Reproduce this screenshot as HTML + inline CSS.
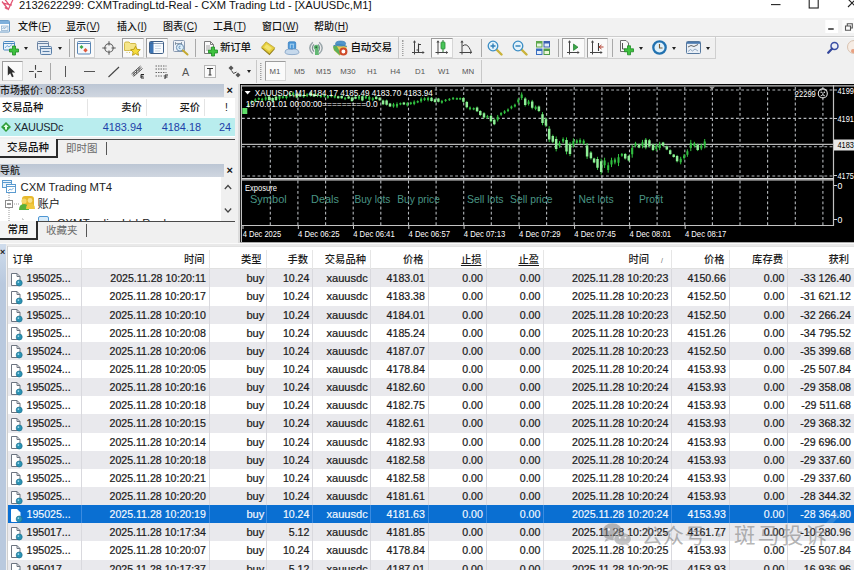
<!DOCTYPE html>
<html lang="zh-CN">
<head>
<meta charset="utf-8">
<title>2132622299: CXMTradingLtd-Real - CXM Trading Ltd - [XAUUSDc,M1]</title>
<style>
*{box-sizing:border-box;margin:0;padding:0}
html,body{width:854px;height:570px;overflow:hidden;background:#f0f0f0}
body{position:relative;font-family:"Liberation Sans","Noto Sans CJK SC",sans-serif;font-size:11px;color:#1a1a1a}
.abs{position:absolute}
svg{display:block}
/* title */
#title{position:absolute;left:0;top:0;width:854px;height:18px;background:#fff}
#title .t{position:absolute;left:19px;top:-2px;font-size:11.150px;line-height:15px;color:#111;white-space:nowrap}
/* menu */
#menu{position:absolute;left:0;top:18px;width:854px;height:18px;background:#f2f2f2}
#menu span{position:absolute;top:0;line-height:18px;letter-spacing:.1px;font-size:10px;font-weight:500;white-space:nowrap;color:#111}
/* toolbars */
#tb1{position:absolute;left:0;top:35.500px;width:854px;height:23.500px;background:#f0f0f0;border-top:1px solid #cdcdcd;box-shadow:inset 0 1px 0 #fafafa}
#tb2{position:absolute;left:0;top:59px;width:854px;height:24px;background:#f0f0f0;border-top:1px solid #f0f0f0}
.ic{position:absolute}
.sep{position:absolute;width:1px;background:#a9a9a9}
.pressed{position:absolute;background:#fafafa;border:1px solid #d6d6d6;border-top-color:#9c9c9c;border-left-color:#9c9c9c}
.dd{position:absolute;width:0;height:0;border:2.5px solid transparent;border-top:3px solid #222;border-bottom:0}
.tbt{position:absolute;font-size:11.5px;line-height:14px;color:#111;white-space:nowrap}
.tf{position:absolute;top:5.700px;font-size:7.800px;line-height:12px;color:#555;white-space:nowrap}
.grip{position:absolute;width:2px;border-left:1px dotted #a0a0a0;border-right:1px dotted #c8c8c8}
/* panels */
.phead{position:absolute;left:0;width:224px;height:13px;background:linear-gradient(#bcc6d4,#cfd6e0);font-size:10px;font-weight:500;line-height:13px;color:#1c1c1c;white-space:nowrap;overflow:hidden}
.px{position:absolute;left:226.500px;font-size:11px;font-weight:bold;line-height:12px;color:#111}
#mw{position:absolute;left:0;top:98px;width:235px;height:39px;background:#fff}
#mw .h{position:absolute;top:0;height:20px;line-height:19px;font-size:10.3px;font-weight:500;color:#111;white-space:nowrap}
#mw .vs{position:absolute;top:1px;width:1px;height:17px;background:#e4e4e4}
#mw .row{position:absolute;left:0;top:20px;width:235px;height:18px;background:#b9edee}
#mw .row span{position:absolute;top:0;line-height:18px;font-size:10.9px;color:#1e3fa8;white-space:nowrap;text-align:right}
.tabs{position:absolute;left:0;width:235px;height:19px;background:#f0f0f0;border-top:1px solid #4a4a4a}
.tabs .act{position:absolute;left:0;top:-1px;height:19px;background:#f4f4f4;border-right:2px solid #2a2a2a;border-bottom:2px solid #2a2a2a;font-size:10.5px;font-weight:500;line-height:16px;color:#111;text-align:center;white-space:nowrap}
.tabs .ina{position:absolute;top:1px;font-size:10.5px;line-height:14px;color:#6a6a6a;white-space:nowrap}
.tabs .bar{position:absolute;top:2px;width:1px;height:13px;background:#555}
#nav{position:absolute;left:0;top:177px;width:235px;height:44px;background:#fff;overflow:hidden}
#nav .tx{position:absolute;font-size:11.3px;line-height:14px;color:#222;white-space:nowrap}
#nav .sb{position:absolute;left:221px;top:0;width:14px;height:44px;background:#f0f0f0}
/* chart */
svg.chart{position:absolute}
.ct{font-family:"Liberation Sans",sans-serif;font-size:8.2px;fill:#fff}
.cl{font-family:"Liberation Sans",sans-serif;font-size:11.5px;fill:#4a9584}
/* terminal */
#termstrip{position:absolute;left:0;top:244px;width:6px;height:326px;background:linear-gradient(#cfdcec,#b9c9de 40px)}
#termstrip b{position:absolute;left:0;top:3px;font-size:9px;line-height:10px;color:#222}
#term{position:absolute;left:6.5px;top:246px;width:848px;height:324px;background:#fff;overflow:hidden;border-left:1px solid #cfcfcf}
.thead{position:absolute;left:0;top:0;width:847px;height:23.3px;background:#fff;border-top:1px solid #e2e2e2;border-bottom:1px solid #e0e0e0}
.hc{position:absolute;top:2.5px;height:20px;line-height:20px;font-size:10.3px;font-weight:500;color:#1a1a1a;text-align:right;padding-right:4px;border-right:1px solid #e6e6e6;white-space:nowrap}
.hc.hl{text-align:left;padding-left:5px}
.hc u{text-decoration:underline;text-underline-offset:2px}
.sortm{position:absolute;right:8px;top:1px;font-style:normal;font-size:7px;color:#666}
.tr{position:absolute;left:0;width:847px;height:18.2px;background:#fff}
.tr.odd{background:#e9e9ed}
.tr.sel{background:#0a6fd2}
.tr.sel .ico path{stroke:#fff}.tr.sel .c{color:#f2f8ff;border-right-color:#3b8be0;-webkit-text-stroke:.15px #fff}
.c{position:absolute;top:0;height:18.2px;line-height:18.4px;font-size:10.6px;color:#1a1a1a;text-align:right;padding-right:2.600px;border-right:1px solid #d9d9de;white-space:nowrap;overflow:hidden;-webkit-text-stroke:.22px #1a1a1a}
.c0{text-align:left;padding-left:19px}
.c0 .ico{position:absolute;left:2.500px;top:3.600px}
#wm{position:absolute;left:594px;top:490px;width:260px;height:80px;pointer-events:none}
</style>
</head>
<body>
<!-- title bar -->
<div id="title">
  <svg class="ic" style="left:0;top:0" width="15" height="12" viewBox="0 0 15 12"><path d="M2 1.500l6.300 8 4.700-10M5 -.5l4.200 5.500M3.200 3.200l8.600 2M7 9l-2.200-1.500" stroke="#e25474" stroke-width="1.250" fill="none" stroke-linejoin="round"/></svg>
  <span class="t">2132622299: CXMTradingLtd-Real - CXM Trading Ltd - [XAUUSDc,M1]</span>
  <svg class="ic" style="left:765px;top:0" width="89" height="17" viewBox="0 0 89 17"><path d="M6 4.600h9.500" stroke="#222" stroke-width="1.100"/><rect x="44.200" y="-1" width="9" height="9" fill="none" stroke="#222" stroke-width="1.100"/><path d="M83 -1l8 8M91 -1l-8 8" stroke="#222" stroke-width="1.100"/></svg>
</div>
<!-- menu bar -->
<div id="menu">
  <svg class="ic" style="left:0;top:2px" width="10" height="13" viewBox="0 0 10 13"><rect x="-3" y=".5" width="12.500" height="11.500" rx="1" fill="#fdfeff" stroke="#6a9cc8"/><rect x="-3" y="1" width="12" height="3" fill="#7fb0dc"/><rect x="1.500" y="6" width="6.500" height="4.500" fill="#eef5fb" stroke="#86a9c8" stroke-width=".7"/><path d="M2.500 9l1.200-1.500 1.200 1 1.600-1.800" stroke="#5d8fba" fill="none" stroke-width=".7"/></svg>
  <span style="left:18px">文件(<u>F</u>)</span>
  <span style="left:66px">显示(<u>V</u>)</span>
  <span style="left:117px">插入(<u>I</u>)</span>
  <span style="left:163px">图表(<u>C</u>)</span>
  <span style="left:213px">工具(<u>T</u>)</span>
  <span style="left:262px">窗口(<u>W</u>)</span>
  <span style="left:314px">帮助(<u>H</u>)</span>
  <svg class="ic" style="left:824px;top:0" width="30" height="17" viewBox="0 0 30 17"><rect x="1.300" y="2" width="12.800" height="13" fill="#fff"/><rect x="18.200" y="2" width="12" height="13" fill="#fbfbfb"/><path d="M4.200 11h5.500" stroke="#444" stroke-width="1.700"/><path d="M21.500 8h5v4.200h-5zM23.300 8v-2.300h5v4.300h-1.800" stroke="#555" fill="none" stroke-width="1.100"/></svg>
</div>
<!-- toolbar 1 -->
<div id="tb1">
<div class="abs" style="left:0;top:0;width:716px;height:22px;border-right:1px solid #cfcfcf;border-bottom:1px solid #cfcfcf"></div>
<!-- new chart -->
<svg class="ic" style="left:3px;top:3px" width="16" height="16" viewBox="0 0 16 16"><rect x=".5" y="1.500" width="11" height="8.500" rx="1" fill="#eaf3fb" stroke="#4a88c0"/><path d="M.5 3.500h11" stroke="#4a88c0"/><path d="M2 8l2-2.500 2 1.500 3-2.500" stroke="#5c9bd0" fill="none" stroke-width=".8"/><path d="M8 9.500h3v-3h3v3h3v3h-3v3h-3v-3h-3z" transform="translate(-1.500,-.5)" fill="#3fc23f" stroke="#1d8a24" stroke-width=".8"/></svg>
<i class="dd" style="left:24px;top:10px"></i>
<!-- profiles -->
<svg class="ic" style="left:37px;top:3px" width="16" height="16" viewBox="0 0 16 16"><rect x=".5" y="1.500" width="11" height="8.500" rx="1" fill="#e6edf5" stroke="#6b83a3"/><path d="M.5 3.500h11M2.500 6.500h7" stroke="#6b83a3"/><rect x="3.500" y="6.500" width="11" height="8" rx="1" fill="#dfe9f4" stroke="#5a7fa8"/><path d="M3.500 8.500h11M5.500 11.500h7" stroke="#5a7fa8"/></svg>
<i class="dd" style="left:58px;top:10px"></i>
<i class="sep" style="left:69px;top:2px;height:18px"></i>
<!-- market watch pressed -->
<div class="pressed" style="left:73.500px;top:1px;width:21px;height:20px"></div>
<svg class="ic" style="left:77px;top:4px" width="14" height="14" viewBox="0 0 14 14"><rect x=".5" y=".5" width="13" height="12.500" rx="1" fill="#f4f8fc" stroke="#5a86b5"/><path d="M.5 2.500h13" stroke="#5a86b5"/><path d="M4.500 4l2 2-2 2-2-2z" fill="#39a845"/><path d="M8.500 7l2.200 2.200-2.200 2.200-2.200-2.200z" fill="#e0583a"/></svg>
<!-- data window crosshair -->
<svg class="ic" style="left:101px;top:3px" width="16" height="16" viewBox="0 0 16 16"><circle cx="8" cy="8" r="4.200" fill="none" stroke="#555" stroke-width="1.050"/><path d="M8 1.300v4.200M8 10.500v4.200M1.300 8h4.200M10.500 8h4.200" stroke="#555" stroke-width="1.050"/></svg>
<!-- navigator pressed -->
<div class="pressed" style="left:121.500px;top:1px;width:22px;height:20px"></div>
<svg class="ic" style="left:124px;top:3px" width="17" height="16" viewBox="0 0 17 16"><path d="M.5 3.500q0-1.500 1.500-1.500h3l1.500 1.500h4.500q1 0 1 1v6h-11.500z" fill="#f5e58a" stroke="#cdb23a" stroke-width=".9"/><path d="M3 10v4M5.500 10v4" stroke="#d6c465" stroke-dasharray="1 1"/><path d="M11.500 6.200l1.500 3.100 3.300.4-2.400 2.300.6 3.300-3-1.600-3 1.600.6-3.300-2.400-2.300 3.300-.4z" fill="#f6dc3c" stroke="#b89a16" stroke-width=".9"/></svg>
<!-- terminal pressed -->
<div class="pressed" style="left:145.500px;top:1px;width:22px;height:20px"></div>
<svg class="ic" style="left:149px;top:4px" width="15" height="13" viewBox="0 0 15 13"><rect x=".5" y=".5" width="14" height="12" rx="1.200" fill="#f8fbfe" stroke="#3f5f86"/><rect x="1" y="1" width="3.500" height="11" fill="#3c74b4"/><path d="M1 2.500h13" stroke="#3f5f86" stroke-width=".6"/><path d="M6 5h6M6 7.500h6M6 10h5" stroke="#c5d3e2" stroke-width=".9"/></svg>
<!-- strategy tester -->
<svg class="ic" style="left:173px;top:3px" width="16" height="16" viewBox="0 0 16 16"><rect x=".5" y=".5" width="11" height="11" rx="1" fill="#eef2f8" stroke="#8a9ab0"/><path d="M2.500 2v3M8.500 2v3M2 3.500h7" stroke="#7a8a9c" stroke-width=".8"/><circle cx="7" cy="7.500" r="3.600" fill="#dbeefa" stroke="#6f8fb0" stroke-width="1"/><path d="M7.500 6.200q-1.500-.4-1.500 1.200t1.500 1.200" stroke="#5d89b5" fill="none" stroke-width=".9"/><path d="M10 10.500l4.500 4" stroke="#c4a930" stroke-width="2" stroke-linecap="round"/></svg>
<i class="sep" style="left:195px;top:2px;height:18px"></i>
<!-- new order -->
<svg class="ic" style="left:203px;top:4px" width="16" height="16" viewBox="0 0 16 16"><path d="M1.500 .5h6l3 3v9h-9z" fill="#fbfbfb" stroke="#7d7d7d"/><path d="M7.500 .5v3h3" fill="none" stroke="#7d7d7d"/><path d="M3 5h4M3 7h5M3 9h3" stroke="#9a9a9a" stroke-width=".9"/><path d="M7 9.500h3v-3h3v3h3v3h-3v3h-3v-3h-3z" transform="translate(-1.500,-.5)" fill="#3fc23f" stroke="#1d8a24" stroke-width=".8"/></svg>
<span class="tbt" style="left:220px;top:3px;font-size:10.600px;letter-spacing:-.4px;font-weight:500">新订单</span>
<!-- gold book -->
<svg class="ic" style="left:260px;top:3px" width="16" height="16" viewBox="0 0 16 16"><path d="M1.400 8.300l4.700-5.900 8.800 6.500-5.400 6.300z" fill="#8f7c1e"/><path d="M1.400 7.300l4.700-5.400 8.800 6-5.400 5.800z" fill="#e6cf3e" stroke="#b39a22" stroke-width=".7"/><path d="M4 7.200l2.600-3 5.400 3.800-2.800 3z" fill="#f3e46e"/></svg>
<!-- blue people -->
<svg class="ic" style="left:284px;top:3px" width="16" height="16" viewBox="0 0 16 16"><rect x="4.300" y="1.800" width="7.400" height="7.600" rx="1.300" fill="#4b97d6" stroke="#3a7fc0" stroke-width=".8"/><path d="M6 4.200h4.200M6.300 4.200v4M9.300 4.200v4" stroke="#a9d2f2" stroke-width="1"/><path d="M1 12.200q0-2.800 3.200-3t3.800.4q1-.9 3.800-.4t3.200 3q0 2.400-7 2.400t-7-2.400z" fill="#c6d9ec" stroke="#7f9fc4" stroke-width=".8"/></svg>
<!-- signals -->
<svg class="ic" style="left:308px;top:3px" width="16" height="16" viewBox="0 0 16 16"><path d="M4.800 2.200q-6 5.800 0 11.600M11.200 2.200q6 5.800 0 11.600" stroke="#9aa6aa" stroke-width="1.500" fill="none"/><path d="M6 4.400q-3.200 3.600 0 7.200M10 4.400q3.200 3.600 0 7.200" stroke="#7f9094" stroke-width="1.200" fill="none"/><path d="M7 8h3.200l.8 7h-4z" fill="#63b874"/><circle cx="8.300" cy="7.300" r="2.500" fill="#5fb672"/><circle cx="8.200" cy="7.300" r="1" fill="#2f6a40"/></svg>
<!-- autotrading -->
<svg class="ic" style="left:332px;top:3px" width="16" height="16" viewBox="0 0 16 16"><path d="M1 6.500l3-2.500 8 .5 3 2-2 6-5.500 3-5.500-5z" fill="#e6cc52"/><path d="M1 6.500l3.500-1 3 5.500.500 4.500-6-5.500z" fill="#5cb05a"/><ellipse cx="8.600" cy="3.600" rx="5" ry="2.500" fill="#4f95cc" stroke="#3b7db4" stroke-width=".7"/><path d="M1.500 6q3-1.800 6.500-1.300t6.800 1.800" stroke="#3f86c0" stroke-width="1.300" fill="none"/><circle cx="11.400" cy="11.500" r="3" fill="#fff" stroke="#cf4a2a" stroke-width="2.100"/></svg>
<span class="tbt" style="left:350.500px;top:3px;font-size:10.600px;letter-spacing:-.25px;font-weight:500">自动交易</span>
<i class="sep" style="left:398px;top:0;height:22px;background:#c8c8c8"></i>
<i class="grip" style="left:402px;top:3px;height:16px"></i>
<!-- bar chart -->
<svg class="ic" style="left:411px;top:3px" width="14" height="16" viewBox="0 0 14 16"><path d="M3.500 1.500v13M1 12.500h12" stroke="#444" stroke-width="1" fill="none"/><path d="M3.500 .3l-1.600 2.200h3.200zM13.700 12.500l-2.200-1.600v3.200z" fill="#444"/><path d="M7.500 3.500v9M7.500 4.500h2.500M5.500 10h2" stroke="#3c3c3c" stroke-width="1.100"/></svg>
<!-- candles pressed -->
<div class="pressed" style="left:431px;top:1px;width:22px;height:20px"></div>
<svg class="ic" style="left:435px;top:3px" width="14" height="16" viewBox="0 0 14 16"><path d="M3 1.500v13M.5 12.500h12" stroke="#444" stroke-width="1" fill="none"/><path d="M3 .3l-1.600 2.200h3.200zM13.200 12.500l-2.200-1.600v3.200z" fill="#444"/><path d="M8 0v12" stroke="#2b7a34" stroke-width="1"/><rect x="6" y="2" width="4" height="7" rx=".8" fill="#48c558" stroke="#2b8a38" stroke-width=".8"/></svg>
<!-- line chart -->
<svg class="ic" style="left:459px;top:3px" width="14" height="16" viewBox="0 0 14 16"><path d="M3 1.500v13M.5 12.500h12" stroke="#444" stroke-width="1" fill="none"/><path d="M3 .3l-1.600 2.200h3.200zM13.200 12.500l-2.200-1.600v3.200z" fill="#444"/><path d="M3.500 6q4-3 6.500 1.500t2.500 4" stroke="#3c3c3c" stroke-width="1" fill="none"/></svg>
<i class="sep" style="left:480.500px;top:2px;height:18px"></i>
<!-- zoom in -->
<svg class="ic" style="left:487px;top:3px" width="16" height="16" viewBox="0 0 16 16"><path d="M9.500 9.500l5 5" stroke="#c9b23a" stroke-width="2.400" stroke-linecap="round"/><circle cx="6" cy="6" r="4.800" fill="#e4f3fb" stroke="#3b8dc4" stroke-width="1.300"/><path d="M3.500 6h5M6 3.500v5" stroke="#2f7fb8" stroke-width="1.400"/></svg>
<!-- zoom out -->
<svg class="ic" style="left:511.500px;top:3px" width="16" height="16" viewBox="0 0 16 16"><path d="M9.500 9.500l5 5" stroke="#c9b23a" stroke-width="2.400" stroke-linecap="round"/><circle cx="6" cy="6" r="4.800" fill="#e4f3fb" stroke="#3b8dc4" stroke-width="1.300"/><path d="M3.500 6h5" stroke="#2f7fb8" stroke-width="1.400"/></svg>
<!-- tile -->
<svg class="ic" style="left:536px;top:4px" width="14" height="14" viewBox="0 0 14 14"><rect x="0" y="0" width="6.500" height="6.500" fill="#5ea84c"/><rect x="7.500" y="0" width="6.500" height="6.500" fill="#3a5fb0"/><rect x="0" y="7.500" width="6.500" height="6.500" fill="#3a6fc0"/><rect x="7.500" y="7.500" width="6.500" height="6.500" fill="#4e9c48"/><rect x="1" y="2.500" width="4.500" height="3" fill="#e8f6e0"/><rect x="8.500" y="2.500" width="4.500" height="3" fill="#e2ecfa"/><rect x="1" y="10" width="4.500" height="3" fill="#e2ecfa"/><rect x="8.500" y="10" width="4.500" height="3" fill="#eef8d8"/></svg>
<i class="sep" style="left:558px;top:2px;height:18px"></i>
<!-- autoscroll pressed -->
<div class="pressed" style="left:562px;top:1px;width:22.500px;height:20px"></div>
<svg class="ic" style="left:567px;top:3px" width="13" height="16" viewBox="0 0 13 16"><path d="M2.500 1.500v13M0 12.500h12" stroke="#444" stroke-width="1" fill="none"/><path d="M2.500 .3l-1.600 2.200h3.200zM12.700 12.500l-2.200-1.600v3.200z" fill="#444"/><path d="M6.500 4l4.500 3.200-4.500 3.200z" fill="#3aa847" stroke="#237a30" stroke-width=".7"/></svg>
<!-- chart shift pressed -->
<div class="pressed" style="left:586.500px;top:1px;width:21.500px;height:20px"></div>
<svg class="ic" style="left:590px;top:3px" width="14" height="16" viewBox="0 0 14 16"><path d="M2.500 1.500v13M0 12.500h12" stroke="#444" stroke-width="1" fill="none"/><path d="M2.500 .3l-1.600 2.200h3.200zM12.700 12.500l-2.200-1.600v3.200z" fill="#444"/><path d="M8.500 3v8" stroke="#3c3c3c" stroke-width="1.100"/><path d="M13.500 7h-4.500M11.500 5l-2.500 2 2.500 2" stroke="#b03a2a" stroke-width="1" fill="none"/></svg>
<i class="sep" style="left:611.500px;top:2px;height:18px"></i>
<!-- indicators -->
<svg class="ic" style="left:619px;top:3px" width="16" height="16" viewBox="0 0 16 16"><path d="M1.500 .5h5.500l2.500 2.500v8.500h-8z" fill="#fafafa" stroke="#6d6d6d"/><path d="M3.500 3v6h3" fill="none" stroke="#555" stroke-width="1"/><path d="M7 8.500h3v-3h3v3h3v3h-3v3h-3v-3h-3z" transform="translate(-1.500,.3)" fill="#3fc23f" stroke="#1d8a24" stroke-width=".8"/></svg>
<i class="dd" style="left:638.500px;top:10px"></i>
<!-- clock -->
<svg class="ic" style="left:652px;top:3.500px" width="15" height="15" viewBox="0 0 15 15"><circle cx="7.500" cy="7.500" r="6.200" fill="#dff1fb" stroke="#2272b0" stroke-width="2.300"/><path d="M7.500 4v4h3" stroke="#7a5a30" stroke-width="1.100" fill="none"/></svg>
<i class="dd" style="left:672px;top:10px"></i>
<!-- template -->
<svg class="ic" style="left:685.500px;top:4px" width="15" height="13" viewBox="0 0 15 13"><rect x=".5" y=".5" width="14" height="12" rx="1" fill="#e9eff6" stroke="#56789e"/><rect x="1" y="1" width="13" height="1.800" fill="#4a78ac"/><path d="M2 6l3-1.500 3 1 4-2" stroke="#555" stroke-width=".9" fill="none"/><path d="M2 10.500l2.500-2 2 1.500 2.500-2 3 2" stroke="#7b95b3" stroke-width=".8" fill="none"/></svg>
<i class="dd" style="left:705.500px;top:10px"></i>
<!-- search -->
<svg class="ic" style="left:826px;top:4px" width="14" height="14" viewBox="0 0 14 14"><circle cx="8.500" cy="5" r="3.500" fill="#eceff6" stroke="#3a4ea4" stroke-width="1.500"/><path d="M6 7.700l-3.800 4" stroke="#34479c" stroke-width="2.300" stroke-linecap="round"/></svg>
<svg class="ic" style="left:846px;top:3px" width="8" height="16" viewBox="0 0 8 16"><circle cx="8" cy="7" r="6.500" fill="#f6ece4" stroke="#d9c2b0" stroke-width="1"/><circle cx="7" cy="11" r="2" fill="#e8a080"/></svg>

</div>
<!-- toolbar 2 -->
<div id="tb2">
<div class="abs" style="left:0;top:0;width:256.500px;height:23px;border-right:1px solid #c8c8c8"></div>
<div class="abs" style="left:256px;top:0;width:225.500px;height:23px;border-right:1px solid #c8c8c8"></div>
<div class="pressed" style="left:1.500px;top:1px;width:21.500px;height:20px"></div>
<svg class="ic" style="left:7px;top:5px" width="9" height="13" viewBox="0 0 9 13"><path d="M.8 .5v10l2.400-2.300 1.800 4 1.700-.8-1.800-3.800h3.300z" fill="#2e2e2e"/></svg>
<svg class="ic" style="left:29px;top:5px" width="13" height="13" viewBox="0 0 13 13"><path d="M6.500 0v4.800M6.500 8.200v4.800M0 6.500h4.800M8.200 6.500h4.800" stroke="#444" stroke-width="1.100"/></svg>
<i class="sep" style="left:50px;top:3px;height:17px"></i>
<i class="sep" style="left:64.500px;top:6px;height:11px;background:#555"></i>
<i class="abs" style="left:84px;top:11px;width:11px;height:1px;background:#555"></i>
<svg class="ic" style="left:108px;top:6px" width="12" height="12" viewBox="0 0 12 12"><path d="M.5 11l10.500-10" stroke="#444" stroke-width="1.100"/></svg>
<svg class="ic" style="left:131px;top:4px" width="14" height="15" viewBox="0 0 14 15"><path d="M.5 10l9-8M2.500 12.500l9-8M1.500 11.200l9-8" stroke="#444" stroke-width=".9"/><path d="M3 8v4M5.500 6v4M8 3.500v4" stroke="#444" stroke-width=".7"/><path d="M10 10.500h3M10 12.200h2.500M10 14h3M10 10.500v3.500" stroke="#222" stroke-width="1"/></svg>
<svg class="ic" style="left:155px;top:5px" width="14" height="14" viewBox="0 0 14 14"><path d="M.5 1h11M.5 4h11M.5 7.500h11M.5 11h8" stroke="#555" stroke-width=".9" stroke-dasharray="1.500 1"/><path d="M10 10h3M10 12h2.500M10 10v4" stroke="#222" stroke-width="1"/></svg>
<span class="abs" style="left:182px;top:5px;font-size:10.800px;line-height:14px;color:#555">A</span>
<svg class="ic" style="left:204px;top:5px" width="12" height="13" viewBox="0 0 12 13"><rect x=".5" y=".5" width="11" height="12" fill="#fbfbfb" stroke="#777" stroke-dasharray="1 1"/><path d="M3 3.500h6M6 3.500v6.500M4.500 10h3" stroke="#333" stroke-width="1.100"/></svg>
<svg class="ic" style="left:228px;top:5px" width="13" height="13" viewBox="0 0 13 13"><path d="M3 .5l2.500 2.500-2.500 2.500-2.500-2.500z" fill="#555"/><path d="M10 7.500l2.500 2.500-2.500 2.500-2.500-2.500z" fill="#555"/><path d="M3.500 5.500l2 3 3-1.500" stroke="#444" stroke-width="1" fill="none"/></svg>
<i class="dd" style="left:246.500px;top:10px"></i>
<i class="grip" style="left:259.500px;top:3px;height:17px"></i>
<div class="pressed" style="left:264.500px;top:1px;width:21.500px;height:20px"></div>
<span class="tf" style="left:269.500px">M1</span>
<span class="tf" style="left:294px">M5</span>
<span class="tf" style="left:316px">M15</span>
<span class="tf" style="left:340.300px">M30</span>
<span class="tf" style="left:367px">H1</span>
<span class="tf" style="left:390.300px">H4</span>
<span class="tf" style="left:415px">D1</span>
<span class="tf" style="left:438px">W1</span>
<span class="tf" style="left:462px">MN</span>

</div>

<!-- market watch -->
<div class="phead" style="top:84px">市场报价: 08:23:53</div>
<div class="px" style="top:84px">×</div>
<div id="mw">
  <span class="h" style="left:2px">交易品种</span>
  <span class="h" style="left:121.200px">卖价</span>
  <span class="h" style="left:179.500px">买价</span>
  <span class="h" style="left:225px">!</span>
  <i class="vs" style="left:87px"></i><i class="vs" style="left:146px"></i><i class="vs" style="left:204px"></i>
  <div class="row">
    <svg class="ic" style="left:1px;top:4px" width="10" height="10" viewBox="0 0 10 10"><path d="M5 0l5 5-5 5-5-5z" fill="#2f9e3a"/><path d="M5 2.2l2.6 2.8h-1.6v2.4h-2v-2.4h-1.6z" fill="#e6ffe6"/></svg>
    <span style="left:14px;color:#1a2530;text-align:left;letter-spacing:-.25px">XAUUSDc</span>
    <span style="left:92px;width:50px">4183.94</span>
    <span style="left:151px;width:50px">4184.18</span>
    <span style="left:210px;width:21px">24</span>
  </div>
</div>
<div class="tabs" style="top:139px">
  <div class="act" style="width:58px">交易品种</div>
  <span class="ina" style="left:66px">即时图</span>
  <i class="bar" style="left:106px"></i>
</div>

<!-- navigator -->
<div class="phead" style="top:164px">导航</div>
<div class="px" style="top:164px">×</div>
<div id="nav">
  <svg class="ic" style="left:2px;top:3px" width="14" height="13" viewBox="0 0 14 13"><rect x=".5" y=".5" width="9" height="7" fill="#eaf4fc" stroke="#5b9bd0"/><path d="M.5 2.5h9" stroke="#5b9bd0"/><rect x="4.5" y="4.5" width="9" height="8" fill="#fff" stroke="#5b9bd0"/><path d="M4.5 6.5h9" stroke="#5b9bd0"/><path d="M6 11l2-2 1.5 1 2-2" stroke="#5b9bd0" fill="none" stroke-width=".8"/></svg>
  <span class="tx" style="left:20.5px;top:3px">CXM Trading MT4</span>
  <svg class="ic" style="left:4px;top:16px" width="20" height="30" viewBox="0 0 20 30"><path d="M5 0v7M5 15v15M10 11h5M20 26v4M18 26h4" stroke="#9a9a9a" stroke-dasharray="1 1" fill="none"/><rect x="1.5" y="7.5" width="7" height="7" fill="#fff" stroke="#8a8a8a"/><path d="M3 11h4" stroke="#333"/></svg>
  <svg class="ic" style="left:19px;top:19px" width="16" height="15" viewBox="0 0 16 15"><rect x="3" y="0" width="12" height="13" rx="3" fill="#e8b92c"/><circle cx="5" cy="5" r="2.6" fill="#f5d76a"/><path d="M0 14q0-6 5-6t5 6z" fill="#58b03a"/><circle cx="11" cy="4.5" r="2.4" fill="#f7e08a"/><path d="M7 13q0-5.5 4.5-5.5t4.500 5.500z" fill="#f0c840"/></svg>
  <span class="tx" style="left:37.5px;top:20px">账户</span>
  <svg class="ic" style="left:38px;top:39px" width="12" height="8" viewBox="0 0 12 8"><rect x=".5" y=".5" width="10" height="8" rx="1.5" fill="#d9ecfa" stroke="#4f97d3"/></svg>
  <span class="tx" style="left:57px;top:39px;letter-spacing:.2px">CXMTradingLtd-Real</span>
  <div class="sb">
    <svg class="ic" style="left:3px;top:7px" width="8" height="30" viewBox="0 0 8 30"><path d="M.8 5l3.200-3.500 3.200 3.500M.8 24.500l3.200 3.500 3.200-3.500" stroke="#444" stroke-width="1.2" fill="none"/></svg>
  </div>
</div>
<div class="tabs" style="top:220.500px;height:19px">
  <div class="act" style="width:38px">常用</div>
  <span class="ina" style="left:46px">收藏夹</span>
  <i class="bar" style="left:85.500px"></i>
</div>

<!-- chart -->
<svg class="chart" width="616" height="160" viewBox="238 84 616 160" style="left:238px;top:84px">
<rect x="238" y="84" width="2.5" height="160" fill="#dcdcdc"/>
<rect x="240" y="84" width="614" height="158.5" fill="#000"/>
<rect x="238" y="242.5" width="616" height="1.5" fill="#dadada"/>
<path d="M270.3 87V225M297.9 87V225M325.6 87V225M353.2 87V225M380.8 87V225M408.5 87V225M436.1 87V225M463.7 87V225M491.3 87V225M519.0 87V225M546.6 87V225M574.2 87V225M601.9 87V225M629.5 87V225M657.1 87V225M684.8 87V225M712.4 87V225M740.0 87V225M767.6 87V225M795.3 87V225M822.9 87V225" stroke="#b4b8bc" stroke-width="1.1" stroke-dasharray="2.8 2.4" fill="none"/>
<path d="M242 90.0H833M242 118.4H833M242 146.7H833M242 176.0H833" stroke="#b4b8bc" stroke-width="1.1" stroke-dasharray="2.8 2.4" fill="none"/>
<path d="M241.4 85V242M241 85.8H854M833.5 85V226M242 225.500H834" stroke="#c2c2c2" stroke-width="1.2" fill="none"/><path d="M242 178.500H834M242 179.900H834" stroke="#d6d6d6" stroke-width="1.150" fill="none"/>
<path d="M242 144.400H833" stroke="#b8b8b8" stroke-width="1.1" fill="none"/>
<rect x="242.500" y="87" width="192" height="10" fill="#000"/>
<path d="M248.4 103.1V107.6M251.8 100.2V103.4M255.3 98.3V102.4M258.8 97.5V100.2M262.2 97.8V101.3M265.7 96.3V100.8M269.1 95.8V100.8M272.6 97.4V102.0M276.0 95.9V100.9M279.5 94.6V100.4M282.9 95.7V98.7M286.4 94.7V99.4M289.9 91.5V97.3M293.3 91.6V96.7M296.8 92.9V98.3M300.2 93.7V96.9M303.7 93.6V97.8M307.1 93.2V97.1M310.6 92.0V96.6M314.0 93.4V97.0M317.5 93.6V97.1M320.9 94.9V97.9M324.4 93.6V97.5M327.9 95.1V98.7M331.3 94.0V97.5M334.8 95.3V98.3M338.2 95.7V98.7M341.7 95.5V98.8M345.1 96.9V100.1M348.6 96.0V99.0M352.0 96.6V101.8M355.5 96.3V99.2M359.0 95.0V99.8M362.4 95.4V101.3M365.9 95.7V99.1M369.3 95.3V101.2M372.8 97.1V101.1M376.2 96.1V99.7M379.7 97.1V100.8M383.1 99.6V105.1M386.6 99.6V105.6M390.0 102.9V107.0M393.5 102.9V107.7M397.0 102.4V107.9M400.4 102.5V105.2M403.9 101.9V105.1M407.3 102.1V106.5M410.8 101.8V104.9M414.2 100.4V105.2M417.7 100.4V103.2M421.1 97.4V102.7M424.6 97.3V100.9M428.1 96.7V101.4M431.5 97.0V101.6M435.0 98.5V102.7M438.4 97.9V102.4M441.9 99.9V103.7M445.6 99.0V101.8M449.4 98.1V100.9M453.1 97.1V99.9M456.9 97.5V99.9M460.2 97.5V99.9M463.4 97.1V102.7M466.8 100.9V108.4M470.0 106.5V110.2M473.7 107.4V110.2M477.1 106.5V112.1M480.3 110.2V115.9M484.0 112.1V118.7M487.4 114.9V118.7M491.0 114.9V122.4M494.3 118.7V125.2M497.7 114.9V121.5M501.1 112.1V115.9M504.6 110.2V114.0M508.0 108.4V112.1M511.4 105.5V109.3M514.9 103.7V107.4M518.3 98.1V103.7M521.7 92.4V99.9M525.2 97.1V106.5M528.6 99.9V105.5M532.2 99.9V109.3M535.6 105.5V110.2M538.9 105.5V112.1M542.5 112.1V125.2M545.9 117.7V127.1M549.2 126.2V142.1M552.8 134.6V143.0M556.2 136.5V151.4M559.5 141.1V147.7M563.1 137.4V143.0M566.5 137.4V154.3M570.0 142.1V156.1M573.4 138.3V147.7M576.8 139.3V144.0M580.1 138.3V144.0M583.7 139.3V144.9M587.1 143.0V158.9M590.9 151.1V159.6M594.1 157.7V163.3M597.5 156.8V169.9M601.2 158.6V174.6M604.6 157.7V168.0M608.2 162.4V172.7M611.5 157.7V167.1M614.9 157.7V164.3M618.5 154.0V166.1M621.9 153.0V156.8M625.2 153.0V159.6M628.8 154.9V161.4M632.2 144.6V157.7M635.5 141.8V147.4M639.1 143.6V148.3M642.5 139.9V148.3M645.8 138.0V149.3M649.4 139.0V147.4M653.0 143.6V151.1M656.3 143.6V151.1M659.7 141.8V150.2M663.1 141.8V146.5M666.8 145.5V150.2M670.2 149.3V154.9M673.7 154.0V157.7M677.1 154.9V162.4M680.7 156.8V164.3M684.1 154.0V159.6M687.4 149.3V156.8M690.8 139.9V151.1M694.4 141.8V147.4M697.7 143.6V151.1M701.3 143.6V150.2M704.7 139.0V148.3" stroke="#2fc43c" stroke-width="1" fill="none"/>
<path d="M248.4 104.3V106.4M251.8 101.1V102.6M255.3 99.4V101.3M258.8 98.1V99.5M262.2 98.7V100.4M265.7 97.5V99.6M279.5 96.1V98.8M282.9 96.5V97.9M286.4 96.0V98.1M289.9 93.0V95.7M293.3 93.0V95.3M303.7 94.7V96.7M307.1 94.2V96.0M317.5 94.5V96.1M320.9 95.7V97.1M324.4 94.6V96.4M327.9 96.1V97.8M331.3 94.9V96.5M334.8 96.1V97.5M345.1 97.8V99.2M359.0 96.3V98.5M365.9 96.6V98.2M369.3 96.9V99.6M372.8 98.2V100.0M393.5 104.2V106.4M397.0 103.9V106.4M400.4 103.1V104.5M407.3 103.3V105.3M410.8 102.6V104.0M414.2 101.7V103.9M417.7 101.1V102.5M421.1 98.8V101.3M424.6 98.2V99.9M428.1 97.9V100.1M441.9 100.9V102.7M445.6 99.7V101.1M449.4 98.8V100.2M453.1 97.8V99.2M456.9 98.0V99.4M460.2 98.0V99.4M470.0 107.5V109.2M473.7 108.1V109.5M487.4 115.9V117.6M497.7 116.7V119.7M501.1 113.1V114.8M504.6 111.2V113.0M508.0 109.4V111.1M511.4 106.6V108.3M514.9 104.7V106.4M518.3 99.6V102.2M521.7 94.5V97.9M528.6 101.4V104.0M535.6 106.8V109.0M559.5 142.9V145.9M563.1 138.9V141.5M573.4 140.9V145.2M576.8 140.5V142.7M580.1 139.9V142.4M583.7 140.8V143.4M604.6 160.5V165.2M608.2 165.2V169.9M611.5 160.2V164.5M614.9 159.5V162.5M618.5 157.2V162.8M621.9 154.0V155.8M632.2 148.1V154.2M635.5 143.3V145.9M642.5 142.2V146.1M656.3 145.7V149.1M659.7 144.1V147.9M680.7 158.8V162.2M684.1 155.5V158.1M687.4 151.3V154.7M690.8 142.9V148.1M694.4 143.3V145.9M701.3 145.4V148.4M704.7 141.5V145.8" stroke="#30bd40" stroke-width="2.100" fill="none"/>
<path d="M269.1 96.6V100.0M272.6 98.1V101.3M276.0 96.7V100.1M296.8 93.7V97.4M300.2 94.2V96.4M310.6 92.7V95.8M314.0 94.0V96.4M338.2 96.2V98.2M341.7 96.1V98.3M348.6 96.5V98.5M352.0 97.4V100.9M355.5 96.8V98.7M362.4 96.3V100.4M376.2 96.7V99.1M379.7 97.7V100.2M383.1 100.5V104.2M386.6 100.6V104.7M390.0 103.5V106.4M403.9 102.4V104.6M431.5 97.7V100.9M435.0 99.2V102.0M438.4 98.6V101.7M463.4 98.0V101.8M466.8 102.1V107.2M477.1 107.4V111.2M480.3 111.1V115.0M484.0 113.2V117.6M491.0 116.1V121.2M494.3 119.7V124.2M525.2 98.6V105.0M532.2 101.4V107.8M538.9 106.6V111.1M542.5 114.2V123.1M545.9 119.2V125.6M549.2 128.7V139.5M552.8 135.9V141.7M556.2 138.9V149.0M566.5 140.1V151.6M570.0 144.3V153.9M587.1 145.6V156.4M590.9 152.5V158.2M594.1 158.6V162.4M597.5 158.9V167.8M601.2 161.2V172.0M625.2 154.1V158.5M628.8 155.9V160.4M639.1 144.4V147.6M645.8 139.8V147.5M649.4 140.3V146.0M653.0 144.8V149.9M663.1 142.5V145.7M666.8 146.3V149.5M670.2 150.2V154.0M673.7 154.6V157.1M677.1 156.1V161.2M697.7 144.8V149.9" stroke="#8eee96" stroke-width="2.5" fill="none"/>
<rect x="242.300" y="108" width="5" height="6" fill="#5ee068"/>
<path d="M244.600 91h6l-3 3.500z" fill="#fff"/>
<text x="254.800" y="95.800" class="ct" textLength="178" lengthAdjust="spacingAndGlyphs">XAUUSDc,M1  4184.17 4185.49 4183.70 4183.94</text>
<text x="245.700" y="107" class="ct" textLength="132" lengthAdjust="spacingAndGlyphs">1970.01.01 00:00:00=========0.0</text>
<text x="245" y="190.500" class="ct" textLength="32" lengthAdjust="spacingAndGlyphs">Exposure</text>
<text x="250.0" y="203" class="cl" textLength="36.8" lengthAdjust="spacingAndGlyphs">Symbol</text>
<text x="311.0" y="203" class="cl" textLength="28.0" lengthAdjust="spacingAndGlyphs">Deals</text>
<text x="354.4" y="203" class="cl" textLength="36.0" lengthAdjust="spacingAndGlyphs">Buy lots</text>
<text x="397.3" y="203" class="cl" textLength="42.5" lengthAdjust="spacingAndGlyphs">Buy price</text>
<text x="466.9" y="203" class="cl" textLength="36.7" lengthAdjust="spacingAndGlyphs">Sell lots</text>
<text x="510.0" y="203" class="cl" textLength="42.6" lengthAdjust="spacingAndGlyphs">Sell price</text>
<text x="578.6" y="203" class="cl" textLength="35.0" lengthAdjust="spacingAndGlyphs">Net lots</text>
<text x="639.0" y="203" class="cl" textLength="24.0" lengthAdjust="spacingAndGlyphs">Profit</text>
<path d="M243.0 226v3" stroke="#ccc" stroke-width="1"/>
<text x="242.7" y="236.900" class="ct" style="font-size:9px" textLength="38.5" lengthAdjust="spacingAndGlyphs">4 Dec 2025</text>
<path d="M298.3 226v3" stroke="#ccc" stroke-width="1"/>
<text x="298.0" y="236.900" class="ct" style="font-size:9px" textLength="41.5" lengthAdjust="spacingAndGlyphs">4 Dec 06:25</text>
<path d="M353.5 226v3" stroke="#ccc" stroke-width="1"/>
<text x="353.2" y="236.900" class="ct" style="font-size:9px" textLength="41.5" lengthAdjust="spacingAndGlyphs">4 Dec 06:41</text>
<path d="M408.8 226v3" stroke="#ccc" stroke-width="1"/>
<text x="408.5" y="236.900" class="ct" style="font-size:9px" textLength="41.5" lengthAdjust="spacingAndGlyphs">4 Dec 06:57</text>
<path d="M464.1 226v3" stroke="#ccc" stroke-width="1"/>
<text x="463.8" y="236.900" class="ct" style="font-size:9px" textLength="41.5" lengthAdjust="spacingAndGlyphs">4 Dec 07:13</text>
<path d="M519.3 226v3" stroke="#ccc" stroke-width="1"/>
<text x="519.0" y="236.900" class="ct" style="font-size:9px" textLength="41.5" lengthAdjust="spacingAndGlyphs">4 Dec 07:29</text>
<path d="M574.6 226v3" stroke="#ccc" stroke-width="1"/>
<text x="574.3" y="236.900" class="ct" style="font-size:9px" textLength="41.5" lengthAdjust="spacingAndGlyphs">4 Dec 07:45</text>
<path d="M629.9 226v3" stroke="#ccc" stroke-width="1"/>
<text x="629.6" y="236.900" class="ct" style="font-size:9px" textLength="41.5" lengthAdjust="spacingAndGlyphs">4 Dec 08:01</text>
<path d="M685.2 226v3" stroke="#ccc" stroke-width="1"/>
<text x="684.9" y="236.900" class="ct" style="font-size:9px" textLength="41.5" lengthAdjust="spacingAndGlyphs">4 Dec 08:17</text>
<path d="M834 90.0h3" stroke="#ccc"/>
<text x="837.500" y="93.5" class="ct" style="font-size:8.800px" textLength="16.500" lengthAdjust="spacingAndGlyphs">4199</text>
<path d="M834 118.5h3" stroke="#ccc"/>
<text x="837.500" y="122.0" class="ct" style="font-size:8.800px" textLength="16.500" lengthAdjust="spacingAndGlyphs">4191</text>
<path d="M834 175.5h3" stroke="#ccc"/>
<text x="837.500" y="179.0" class="ct" style="font-size:8.800px" textLength="16.500" lengthAdjust="spacingAndGlyphs">4175</text>
<rect x="834" y="139.500" width="22" height="11" fill="#e8e8e8"/>
<text x="837.500" y="148" class="ct" style="fill:#000;font-size:8.800px" textLength="16.500" lengthAdjust="spacingAndGlyphs">4183</text>
<text x="837.500" y="189.200" class="ct" style="font-size:8.800px">0</text>
<text x="837.500" y="223.200" class="ct" style="font-size:8.800px">0</text>
<path d="M834 185.500h3M834 219.500h3" stroke="#ccc"/>
<text x="794.800" y="97" class="ct" style="font-size:9.200px" textLength="21" lengthAdjust="spacingAndGlyphs">22299</text>
<circle cx="822.800" cy="93.400" r="4.500" fill="none" stroke="#e4e4e4" stroke-width="1.100"/><path d="M820.600 96q2.200-2.200 4.400 0" stroke="#e4e4e4" fill="none" stroke-width=".9"/><circle cx="821.200" cy="92.200" r=".75" fill="#e4e4e4"/><circle cx="824.400" cy="92.200" r=".75" fill="#e4e4e4"/>
<path d="M709 86.500h6l-3 3.500z" fill="#999"/>
</svg>

<!-- terminal -->
<div class="abs" style="left:0;top:243px;width:854px;height:3px;background:#e9e9e9;border-top:1px solid #fafafa"></div>
<div id="termstrip"><b>×</b></div>
<div id="term">
<div class="thead">
<span class="hc hl" style="left:0.0px;width:74.5px">订单</span>
<span class="hc" style="left:74.5px;width:127.5px">时间</span>
<span class="hc" style="left:202.0px;width:57.0px">类型</span>
<span class="hc" style="left:259.0px;width:46.5px">手数</span>
<span class="hc" style="left:305.5px;width:58.0px">交易品种</span>
<span class="hc" style="left:363.5px;width:57.5px">价格</span>
<span class="hc" style="left:421.0px;width:58.0px"><u>止损</u></span>
<span class="hc" style="left:479.0px;width:57.5px"><u>止盈</u></span>
<span class="hc" style="left:536.5px;width:128.0px;padding-right:22px">时间<i class="sortm">/</i></span>
<span class="hc" style="left:664.5px;width:57.5px">价格</span>
<span class="hc" style="left:722.0px;width:58.5px">库存费</span>
<span class="hc" style="left:780.5px;width:66.0px;padding-right:5px;border-right:0">获利</span>
</div>
<div class="tr odd" style="top:23.30px">
<span class="c c0" style="left:0.0px;width:74.5px"><svg class="ico" width="13" height="14" viewBox="0 0 13 14"><path d="M1.500 .5h5.500l3 3v9h-8.500z" fill="#fff" stroke="#6c7480"/><path d="M7 .5v3h3" fill="none" stroke="#6c7480"/><circle cx="9.200" cy="10" r="3" fill="#2b93b4" stroke="#1f7391" stroke-width=".7"/><circle cx="8.400" cy="9.100" r=".9" fill="#a9def0"/></svg>195025...</span>
<span class="c" style="left:74.5px;width:127.5px">2025.11.28 10:20:11</span>
<span class="c" style="left:202.0px;width:57.0px;padding-right:1.200px;font-size:11.100px">buy</span>
<span class="c" style="left:259.0px;width:46.5px">10.24</span>
<span class="c" style="left:305.5px;width:58.0px;padding-right:2.200px;font-size:11.100px">xauusdc</span>
<span class="c" style="left:363.5px;width:57.5px">4183.01</span>
<span class="c" style="left:421.0px;width:58.0px">0.00</span>
<span class="c" style="left:479.0px;width:57.5px">0.00</span>
<span class="c" style="left:536.5px;width:128.0px">2025.11.28 10:20:23</span>
<span class="c" style="left:664.5px;width:57.5px">4150.66</span>
<span class="c" style="left:722.0px;width:58.5px">0.00</span>
<span class="c" style="left:780.5px;width:66.0px;padding-right:3px;border-right:0">-33 126.40</span>
</div>
<div class="tr" style="top:41.44px">
<span class="c c0" style="left:0.0px;width:74.5px"><svg class="ico" width="13" height="14" viewBox="0 0 13 14"><path d="M1.500 .5h5.500l3 3v9h-8.500z" fill="#fff" stroke="#6c7480"/><path d="M7 .5v3h3" fill="none" stroke="#6c7480"/><circle cx="9.200" cy="10" r="3" fill="#2b93b4" stroke="#1f7391" stroke-width=".7"/><circle cx="8.400" cy="9.100" r=".9" fill="#a9def0"/></svg>195025...</span>
<span class="c" style="left:74.5px;width:127.5px">2025.11.28 10:20:17</span>
<span class="c" style="left:202.0px;width:57.0px;padding-right:1.200px;font-size:11.100px">buy</span>
<span class="c" style="left:259.0px;width:46.5px">10.24</span>
<span class="c" style="left:305.5px;width:58.0px;padding-right:2.200px;font-size:11.100px">xauusdc</span>
<span class="c" style="left:363.5px;width:57.5px">4183.38</span>
<span class="c" style="left:421.0px;width:58.0px">0.00</span>
<span class="c" style="left:479.0px;width:57.5px">0.00</span>
<span class="c" style="left:536.5px;width:128.0px">2025.11.28 10:20:23</span>
<span class="c" style="left:664.5px;width:57.5px">4152.50</span>
<span class="c" style="left:722.0px;width:58.5px">0.00</span>
<span class="c" style="left:780.5px;width:66.0px;padding-right:3px;border-right:0">-31 621.12</span>
</div>
<div class="tr odd" style="top:59.58px">
<span class="c c0" style="left:0.0px;width:74.5px"><svg class="ico" width="13" height="14" viewBox="0 0 13 14"><path d="M1.500 .5h5.500l3 3v9h-8.500z" fill="#fff" stroke="#6c7480"/><path d="M7 .5v3h3" fill="none" stroke="#6c7480"/><circle cx="9.200" cy="10" r="3" fill="#2b93b4" stroke="#1f7391" stroke-width=".7"/><circle cx="8.400" cy="9.100" r=".9" fill="#a9def0"/></svg>195025...</span>
<span class="c" style="left:74.5px;width:127.5px">2025.11.28 10:20:10</span>
<span class="c" style="left:202.0px;width:57.0px;padding-right:1.200px;font-size:11.100px">buy</span>
<span class="c" style="left:259.0px;width:46.5px">10.24</span>
<span class="c" style="left:305.5px;width:58.0px;padding-right:2.200px;font-size:11.100px">xauusdc</span>
<span class="c" style="left:363.5px;width:57.5px">4184.01</span>
<span class="c" style="left:421.0px;width:58.0px">0.00</span>
<span class="c" style="left:479.0px;width:57.5px">0.00</span>
<span class="c" style="left:536.5px;width:128.0px">2025.11.28 10:20:23</span>
<span class="c" style="left:664.5px;width:57.5px">4152.50</span>
<span class="c" style="left:722.0px;width:58.5px">0.00</span>
<span class="c" style="left:780.5px;width:66.0px;padding-right:3px;border-right:0">-32 266.24</span>
</div>
<div class="tr" style="top:77.72px">
<span class="c c0" style="left:0.0px;width:74.5px"><svg class="ico" width="13" height="14" viewBox="0 0 13 14"><path d="M1.500 .5h5.500l3 3v9h-8.500z" fill="#fff" stroke="#6c7480"/><path d="M7 .5v3h3" fill="none" stroke="#6c7480"/><circle cx="9.200" cy="10" r="3" fill="#2b93b4" stroke="#1f7391" stroke-width=".7"/><circle cx="8.400" cy="9.100" r=".9" fill="#a9def0"/></svg>195025...</span>
<span class="c" style="left:74.5px;width:127.5px">2025.11.28 10:20:08</span>
<span class="c" style="left:202.0px;width:57.0px;padding-right:1.200px;font-size:11.100px">buy</span>
<span class="c" style="left:259.0px;width:46.5px">10.24</span>
<span class="c" style="left:305.5px;width:58.0px;padding-right:2.200px;font-size:11.100px">xauusdc</span>
<span class="c" style="left:363.5px;width:57.5px">4185.24</span>
<span class="c" style="left:421.0px;width:58.0px">0.00</span>
<span class="c" style="left:479.0px;width:57.5px">0.00</span>
<span class="c" style="left:536.5px;width:128.0px">2025.11.28 10:20:23</span>
<span class="c" style="left:664.5px;width:57.5px">4151.26</span>
<span class="c" style="left:722.0px;width:58.5px">0.00</span>
<span class="c" style="left:780.5px;width:66.0px;padding-right:3px;border-right:0">-34 795.52</span>
</div>
<div class="tr odd" style="top:95.86px">
<span class="c c0" style="left:0.0px;width:74.5px"><svg class="ico" width="13" height="14" viewBox="0 0 13 14"><path d="M1.500 .5h5.500l3 3v9h-8.500z" fill="#fff" stroke="#6c7480"/><path d="M7 .5v3h3" fill="none" stroke="#6c7480"/><circle cx="9.200" cy="10" r="3" fill="#2b93b4" stroke="#1f7391" stroke-width=".7"/><circle cx="8.400" cy="9.100" r=".9" fill="#a9def0"/></svg>195024...</span>
<span class="c" style="left:74.5px;width:127.5px">2025.11.28 10:20:06</span>
<span class="c" style="left:202.0px;width:57.0px;padding-right:1.200px;font-size:11.100px">buy</span>
<span class="c" style="left:259.0px;width:46.5px">10.24</span>
<span class="c" style="left:305.5px;width:58.0px;padding-right:2.200px;font-size:11.100px">xauusdc</span>
<span class="c" style="left:363.5px;width:57.5px">4187.07</span>
<span class="c" style="left:421.0px;width:58.0px">0.00</span>
<span class="c" style="left:479.0px;width:57.5px">0.00</span>
<span class="c" style="left:536.5px;width:128.0px">2025.11.28 10:20:23</span>
<span class="c" style="left:664.5px;width:57.5px">4152.50</span>
<span class="c" style="left:722.0px;width:58.5px">0.00</span>
<span class="c" style="left:780.5px;width:66.0px;padding-right:3px;border-right:0">-35 399.68</span>
</div>
<div class="tr" style="top:114.00px">
<span class="c c0" style="left:0.0px;width:74.5px"><svg class="ico" width="13" height="14" viewBox="0 0 13 14"><path d="M1.500 .5h5.500l3 3v9h-8.500z" fill="#fff" stroke="#6c7480"/><path d="M7 .5v3h3" fill="none" stroke="#6c7480"/><circle cx="9.200" cy="10" r="3" fill="#2b93b4" stroke="#1f7391" stroke-width=".7"/><circle cx="8.400" cy="9.100" r=".9" fill="#a9def0"/></svg>195024...</span>
<span class="c" style="left:74.5px;width:127.5px">2025.11.28 10:20:05</span>
<span class="c" style="left:202.0px;width:57.0px;padding-right:1.200px;font-size:11.100px">buy</span>
<span class="c" style="left:259.0px;width:46.5px">10.24</span>
<span class="c" style="left:305.5px;width:58.0px;padding-right:2.200px;font-size:11.100px">xauusdc</span>
<span class="c" style="left:363.5px;width:57.5px">4178.84</span>
<span class="c" style="left:421.0px;width:58.0px">0.00</span>
<span class="c" style="left:479.0px;width:57.5px">0.00</span>
<span class="c" style="left:536.5px;width:128.0px">2025.11.28 10:20:24</span>
<span class="c" style="left:664.5px;width:57.5px">4153.93</span>
<span class="c" style="left:722.0px;width:58.5px">0.00</span>
<span class="c" style="left:780.5px;width:66.0px;padding-right:3px;border-right:0">-25 507.84</span>
</div>
<div class="tr odd" style="top:132.14px">
<span class="c c0" style="left:0.0px;width:74.5px"><svg class="ico" width="13" height="14" viewBox="0 0 13 14"><path d="M1.500 .5h5.500l3 3v9h-8.500z" fill="#fff" stroke="#6c7480"/><path d="M7 .5v3h3" fill="none" stroke="#6c7480"/><circle cx="9.200" cy="10" r="3" fill="#2b93b4" stroke="#1f7391" stroke-width=".7"/><circle cx="8.400" cy="9.100" r=".9" fill="#a9def0"/></svg>195025...</span>
<span class="c" style="left:74.5px;width:127.5px">2025.11.28 10:20:16</span>
<span class="c" style="left:202.0px;width:57.0px;padding-right:1.200px;font-size:11.100px">buy</span>
<span class="c" style="left:259.0px;width:46.5px">10.24</span>
<span class="c" style="left:305.5px;width:58.0px;padding-right:2.200px;font-size:11.100px">xauusdc</span>
<span class="c" style="left:363.5px;width:57.5px">4182.60</span>
<span class="c" style="left:421.0px;width:58.0px">0.00</span>
<span class="c" style="left:479.0px;width:57.5px">0.00</span>
<span class="c" style="left:536.5px;width:128.0px">2025.11.28 10:20:24</span>
<span class="c" style="left:664.5px;width:57.5px">4153.93</span>
<span class="c" style="left:722.0px;width:58.5px">0.00</span>
<span class="c" style="left:780.5px;width:66.0px;padding-right:3px;border-right:0">-29 358.08</span>
</div>
<div class="tr" style="top:150.28px">
<span class="c c0" style="left:0.0px;width:74.5px"><svg class="ico" width="13" height="14" viewBox="0 0 13 14"><path d="M1.500 .5h5.500l3 3v9h-8.500z" fill="#fff" stroke="#6c7480"/><path d="M7 .5v3h3" fill="none" stroke="#6c7480"/><circle cx="9.200" cy="10" r="3" fill="#2b93b4" stroke="#1f7391" stroke-width=".7"/><circle cx="8.400" cy="9.100" r=".9" fill="#a9def0"/></svg>195025...</span>
<span class="c" style="left:74.5px;width:127.5px">2025.11.28 10:20:18</span>
<span class="c" style="left:202.0px;width:57.0px;padding-right:1.200px;font-size:11.100px">buy</span>
<span class="c" style="left:259.0px;width:46.5px">10.24</span>
<span class="c" style="left:305.5px;width:58.0px;padding-right:2.200px;font-size:11.100px">xauusdc</span>
<span class="c" style="left:363.5px;width:57.5px">4182.75</span>
<span class="c" style="left:421.0px;width:58.0px">0.00</span>
<span class="c" style="left:479.0px;width:57.5px">0.00</span>
<span class="c" style="left:536.5px;width:128.0px">2025.11.28 10:20:24</span>
<span class="c" style="left:664.5px;width:57.5px">4153.93</span>
<span class="c" style="left:722.0px;width:58.5px">0.00</span>
<span class="c" style="left:780.5px;width:66.0px;padding-right:3px;border-right:0">-29 511.68</span>
</div>
<div class="tr odd" style="top:168.42px">
<span class="c c0" style="left:0.0px;width:74.5px"><svg class="ico" width="13" height="14" viewBox="0 0 13 14"><path d="M1.500 .5h5.500l3 3v9h-8.500z" fill="#fff" stroke="#6c7480"/><path d="M7 .5v3h3" fill="none" stroke="#6c7480"/><circle cx="9.200" cy="10" r="3" fill="#2b93b4" stroke="#1f7391" stroke-width=".7"/><circle cx="8.400" cy="9.100" r=".9" fill="#a9def0"/></svg>195025...</span>
<span class="c" style="left:74.5px;width:127.5px">2025.11.28 10:20:15</span>
<span class="c" style="left:202.0px;width:57.0px;padding-right:1.200px;font-size:11.100px">buy</span>
<span class="c" style="left:259.0px;width:46.5px">10.24</span>
<span class="c" style="left:305.5px;width:58.0px;padding-right:2.200px;font-size:11.100px">xauusdc</span>
<span class="c" style="left:363.5px;width:57.5px">4182.61</span>
<span class="c" style="left:421.0px;width:58.0px">0.00</span>
<span class="c" style="left:479.0px;width:57.5px">0.00</span>
<span class="c" style="left:536.5px;width:128.0px">2025.11.28 10:20:24</span>
<span class="c" style="left:664.5px;width:57.5px">4153.93</span>
<span class="c" style="left:722.0px;width:58.5px">0.00</span>
<span class="c" style="left:780.5px;width:66.0px;padding-right:3px;border-right:0">-29 368.32</span>
</div>
<div class="tr" style="top:186.56px">
<span class="c c0" style="left:0.0px;width:74.5px"><svg class="ico" width="13" height="14" viewBox="0 0 13 14"><path d="M1.500 .5h5.500l3 3v9h-8.500z" fill="#fff" stroke="#6c7480"/><path d="M7 .5v3h3" fill="none" stroke="#6c7480"/><circle cx="9.200" cy="10" r="3" fill="#2b93b4" stroke="#1f7391" stroke-width=".7"/><circle cx="8.400" cy="9.100" r=".9" fill="#a9def0"/></svg>195025...</span>
<span class="c" style="left:74.5px;width:127.5px">2025.11.28 10:20:14</span>
<span class="c" style="left:202.0px;width:57.0px;padding-right:1.200px;font-size:11.100px">buy</span>
<span class="c" style="left:259.0px;width:46.5px">10.24</span>
<span class="c" style="left:305.5px;width:58.0px;padding-right:2.200px;font-size:11.100px">xauusdc</span>
<span class="c" style="left:363.5px;width:57.5px">4182.93</span>
<span class="c" style="left:421.0px;width:58.0px">0.00</span>
<span class="c" style="left:479.0px;width:57.5px">0.00</span>
<span class="c" style="left:536.5px;width:128.0px">2025.11.28 10:20:24</span>
<span class="c" style="left:664.5px;width:57.5px">4153.93</span>
<span class="c" style="left:722.0px;width:58.5px">0.00</span>
<span class="c" style="left:780.5px;width:66.0px;padding-right:3px;border-right:0">-29 696.00</span>
</div>
<div class="tr odd" style="top:204.70px">
<span class="c c0" style="left:0.0px;width:74.5px"><svg class="ico" width="13" height="14" viewBox="0 0 13 14"><path d="M1.500 .5h5.500l3 3v9h-8.500z" fill="#fff" stroke="#6c7480"/><path d="M7 .5v3h3" fill="none" stroke="#6c7480"/><circle cx="9.200" cy="10" r="3" fill="#2b93b4" stroke="#1f7391" stroke-width=".7"/><circle cx="8.400" cy="9.100" r=".9" fill="#a9def0"/></svg>195025...</span>
<span class="c" style="left:74.5px;width:127.5px">2025.11.28 10:20:18</span>
<span class="c" style="left:202.0px;width:57.0px;padding-right:1.200px;font-size:11.100px">buy</span>
<span class="c" style="left:259.0px;width:46.5px">10.24</span>
<span class="c" style="left:305.5px;width:58.0px;padding-right:2.200px;font-size:11.100px">xauusdc</span>
<span class="c" style="left:363.5px;width:57.5px">4182.58</span>
<span class="c" style="left:421.0px;width:58.0px">0.00</span>
<span class="c" style="left:479.0px;width:57.5px">0.00</span>
<span class="c" style="left:536.5px;width:128.0px">2025.11.28 10:20:24</span>
<span class="c" style="left:664.5px;width:57.5px">4153.93</span>
<span class="c" style="left:722.0px;width:58.5px">0.00</span>
<span class="c" style="left:780.5px;width:66.0px;padding-right:3px;border-right:0">-29 337.60</span>
</div>
<div class="tr" style="top:222.84px">
<span class="c c0" style="left:0.0px;width:74.5px"><svg class="ico" width="13" height="14" viewBox="0 0 13 14"><path d="M1.500 .5h5.500l3 3v9h-8.500z" fill="#fff" stroke="#6c7480"/><path d="M7 .5v3h3" fill="none" stroke="#6c7480"/><circle cx="9.200" cy="10" r="3" fill="#2b93b4" stroke="#1f7391" stroke-width=".7"/><circle cx="8.400" cy="9.100" r=".9" fill="#a9def0"/></svg>195025...</span>
<span class="c" style="left:74.5px;width:127.5px">2025.11.28 10:20:21</span>
<span class="c" style="left:202.0px;width:57.0px;padding-right:1.200px;font-size:11.100px">buy</span>
<span class="c" style="left:259.0px;width:46.5px">10.24</span>
<span class="c" style="left:305.5px;width:58.0px;padding-right:2.200px;font-size:11.100px">xauusdc</span>
<span class="c" style="left:363.5px;width:57.5px">4182.58</span>
<span class="c" style="left:421.0px;width:58.0px">0.00</span>
<span class="c" style="left:479.0px;width:57.5px">0.00</span>
<span class="c" style="left:536.5px;width:128.0px">2025.11.28 10:20:24</span>
<span class="c" style="left:664.5px;width:57.5px">4153.93</span>
<span class="c" style="left:722.0px;width:58.5px">0.00</span>
<span class="c" style="left:780.5px;width:66.0px;padding-right:3px;border-right:0">-29 337.60</span>
</div>
<div class="tr odd" style="top:240.98px">
<span class="c c0" style="left:0.0px;width:74.5px"><svg class="ico" width="13" height="14" viewBox="0 0 13 14"><path d="M1.500 .5h5.500l3 3v9h-8.500z" fill="#fff" stroke="#6c7480"/><path d="M7 .5v3h3" fill="none" stroke="#6c7480"/><circle cx="9.200" cy="10" r="3" fill="#2b93b4" stroke="#1f7391" stroke-width=".7"/><circle cx="8.400" cy="9.100" r=".9" fill="#a9def0"/></svg>195025...</span>
<span class="c" style="left:74.5px;width:127.5px">2025.11.28 10:20:20</span>
<span class="c" style="left:202.0px;width:57.0px;padding-right:1.200px;font-size:11.100px">buy</span>
<span class="c" style="left:259.0px;width:46.5px">10.24</span>
<span class="c" style="left:305.5px;width:58.0px;padding-right:2.200px;font-size:11.100px">xauusdc</span>
<span class="c" style="left:363.5px;width:57.5px">4181.61</span>
<span class="c" style="left:421.0px;width:58.0px">0.00</span>
<span class="c" style="left:479.0px;width:57.5px">0.00</span>
<span class="c" style="left:536.5px;width:128.0px">2025.11.28 10:20:24</span>
<span class="c" style="left:664.5px;width:57.5px">4153.93</span>
<span class="c" style="left:722.0px;width:58.5px">0.00</span>
<span class="c" style="left:780.5px;width:66.0px;padding-right:3px;border-right:0">-28 344.32</span>
</div>
<div class="tr sel" style="top:259.12px">
<span class="c c0" style="left:0.0px;width:74.5px"><svg class="ico" width="13" height="14" viewBox="0 0 13 14"><path d="M1.500 .5h5.500l3 3v9h-8.500z" fill="#fff" stroke="#6c7480"/><path d="M7 .5v3h3" fill="none" stroke="#6c7480"/><circle cx="9.200" cy="10" r="3" fill="#2b93b4" stroke="#1f7391" stroke-width=".7"/><circle cx="8.400" cy="9.100" r=".9" fill="#a9def0"/></svg>195025...</span>
<span class="c" style="left:74.5px;width:127.5px">2025.11.28 10:20:19</span>
<span class="c" style="left:202.0px;width:57.0px;padding-right:1.200px;font-size:11.100px">buy</span>
<span class="c" style="left:259.0px;width:46.5px">10.24</span>
<span class="c" style="left:305.5px;width:58.0px;padding-right:2.200px;font-size:11.100px">xauusdc</span>
<span class="c" style="left:363.5px;width:57.5px">4181.63</span>
<span class="c" style="left:421.0px;width:58.0px">0.00</span>
<span class="c" style="left:479.0px;width:57.5px">0.00</span>
<span class="c" style="left:536.5px;width:128.0px">2025.11.28 10:20:24</span>
<span class="c" style="left:664.5px;width:57.5px">4153.93</span>
<span class="c" style="left:722.0px;width:58.5px">0.00</span>
<span class="c" style="left:780.5px;width:66.0px;padding-right:3px;border-right:0">-28 364.80</span>
</div>
<div class="tr odd" style="top:277.26px">
<span class="c c0" style="left:0.0px;width:74.5px"><svg class="ico" width="13" height="14" viewBox="0 0 13 14"><path d="M1.500 .5h5.500l3 3v9h-8.500z" fill="#fff" stroke="#6c7480"/><path d="M7 .5v3h3" fill="none" stroke="#6c7480"/><circle cx="9.200" cy="10" r="3" fill="#2b93b4" stroke="#1f7391" stroke-width=".7"/><circle cx="8.400" cy="9.100" r=".9" fill="#a9def0"/></svg>195017...</span>
<span class="c" style="left:74.5px;width:127.5px">2025.11.28 10:17:34</span>
<span class="c" style="left:202.0px;width:57.0px;padding-right:1.200px;font-size:11.100px">buy</span>
<span class="c" style="left:259.0px;width:46.5px">5.12</span>
<span class="c" style="left:305.5px;width:58.0px;padding-right:2.200px;font-size:11.100px">xauusdc</span>
<span class="c" style="left:363.5px;width:57.5px">4181.85</span>
<span class="c" style="left:421.0px;width:58.0px">0.00</span>
<span class="c" style="left:479.0px;width:57.5px">0.00</span>
<span class="c" style="left:536.5px;width:128.0px">2025.11.28 10:20:25</span>
<span class="c" style="left:664.5px;width:57.5px">4161.77</span>
<span class="c" style="left:722.0px;width:58.5px">0.00</span>
<span class="c" style="left:780.5px;width:66.0px;padding-right:3px;border-right:0">-10 280.96</span>
</div>
<div class="tr" style="top:295.40px">
<span class="c c0" style="left:0.0px;width:74.5px"><svg class="ico" width="13" height="14" viewBox="0 0 13 14"><path d="M1.500 .5h5.500l3 3v9h-8.500z" fill="#fff" stroke="#6c7480"/><path d="M7 .5v3h3" fill="none" stroke="#6c7480"/><circle cx="9.200" cy="10" r="3" fill="#2b93b4" stroke="#1f7391" stroke-width=".7"/><circle cx="8.400" cy="9.100" r=".9" fill="#a9def0"/></svg>195025...</span>
<span class="c" style="left:74.5px;width:127.5px">2025.11.28 10:20:07</span>
<span class="c" style="left:202.0px;width:57.0px;padding-right:1.200px;font-size:11.100px">buy</span>
<span class="c" style="left:259.0px;width:46.5px">10.24</span>
<span class="c" style="left:305.5px;width:58.0px;padding-right:2.200px;font-size:11.100px">xauusdc</span>
<span class="c" style="left:363.5px;width:57.5px">4178.84</span>
<span class="c" style="left:421.0px;width:58.0px">0.00</span>
<span class="c" style="left:479.0px;width:57.5px">0.00</span>
<span class="c" style="left:536.5px;width:128.0px">2025.11.28 10:20:25</span>
<span class="c" style="left:664.5px;width:57.5px">4153.93</span>
<span class="c" style="left:722.0px;width:58.5px">0.00</span>
<span class="c" style="left:780.5px;width:66.0px;padding-right:3px;border-right:0">-25 507.84</span>
</div>
<div class="tr odd" style="top:313.54px">
<span class="c c0" style="left:0.0px;width:74.5px"><svg class="ico" width="13" height="14" viewBox="0 0 13 14"><path d="M1.500 .5h5.500l3 3v9h-8.500z" fill="#fff" stroke="#6c7480"/><path d="M7 .5v3h3" fill="none" stroke="#6c7480"/><circle cx="9.200" cy="10" r="3" fill="#2b93b4" stroke="#1f7391" stroke-width=".7"/><circle cx="8.400" cy="9.100" r=".9" fill="#a9def0"/></svg>195017...</span>
<span class="c" style="left:74.5px;width:127.5px">2025.11.28 10:17:37</span>
<span class="c" style="left:202.0px;width:57.0px;padding-right:1.200px;font-size:11.100px">buy</span>
<span class="c" style="left:259.0px;width:46.5px">5.12</span>
<span class="c" style="left:305.5px;width:58.0px;padding-right:2.200px;font-size:11.100px">xauusdc</span>
<span class="c" style="left:363.5px;width:57.5px">4187.01</span>
<span class="c" style="left:421.0px;width:58.0px">0.00</span>
<span class="c" style="left:479.0px;width:57.5px">0.00</span>
<span class="c" style="left:536.5px;width:128.0px">2025.11.28 10:20:25</span>
<span class="c" style="left:664.5px;width:57.5px">4153.93</span>
<span class="c" style="left:722.0px;width:58.5px">0.00</span>
<span class="c" style="left:780.5px;width:66.0px;padding-right:3px;border-right:0">-16 936.96</span>
</div>
</div>

<!-- watermark -->
<svg id="wm" viewBox="594 490 260 80" width="260" height="80">
  <g opacity=".5">
    <ellipse cx="612.300" cy="531.800" rx="10" ry="8.500" fill="#7d7d7d"/>
    <path d="M606 538.500l-1.500 3.500 4.500-2z" fill="#7d7d7d"/>
    <ellipse cx="622.600" cy="539" rx="9" ry="6.400" fill="#fff"/>
    <ellipse cx="622.600" cy="539" rx="8.500" ry="6" fill="#8c8c8c"/>
    <path d="M628 543.500l1.500 2.500-4-1.300z" fill="#8c8c8c"/>
    <circle cx="608.800" cy="529.500" r="1.200" fill="#fff"/><circle cx="615.600" cy="529.500" r="1.200" fill="#fff"/>
    <circle cx="619.800" cy="537.800" r="1" fill="#fff"/><circle cx="625.400" cy="537.800" r="1" fill="#fff"/>
  </g>
  <text x="641.500" y="543.300" font-family="'Noto Sans CJK SC',sans-serif" font-size="21" fill="#7e7e7e" fill-opacity=".58" textLength="64" lengthAdjust="spacing">公众号</text>
  <text x="711" y="541" font-family="'Noto Sans CJK SC',sans-serif" font-size="16" fill="#7e7e7e" fill-opacity=".55">·</text>
  <text x="734" y="543.300" font-family="'Noto Sans CJK SC',sans-serif" font-size="21.500" fill="#7e7e7e" fill-opacity=".58" textLength="93" lengthAdjust="spacing">斑马投诉</text>
  <g opacity=".16" stroke="#fff" stroke-width="5" fill="none"><path d="M806 548l32-34M818 560l34-36M832 570l26-28"/></g>
</svg>
</body>
</html>
